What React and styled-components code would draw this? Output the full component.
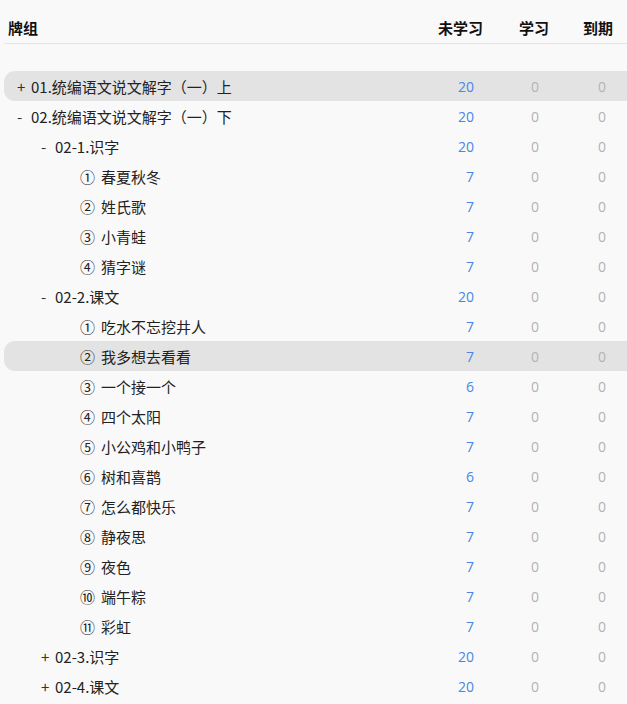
import React from "react";
import styled, { createGlobalStyle } from "styled-components";

const GlobalStyle = createGlobalStyle`
  html, body {
    margin: 0;
    padding: 0;
    background: #f9f9f9;
  }
  body {
    font-family: "Noto Sans CJK SC", "Noto Sans", sans-serif;
    color: #222;
  }
`;

const Page = styled.div`
  padding: 13px 0 0 4px;
  overflow: hidden;
`;

const HeaderRow = styled.div`
  display: grid;
  grid-template-columns: 1fr 70px 66px 64px;
  align-items: center;
  height: 30px;
  padding: 0 7px 0 4px;
  border-bottom: 1px solid #e4e4e4;
  font-size: 15px;
  font-weight: bold;
  color: #111;
`;

const HeadCell = styled.div`
  text-align: ${(p) => (p.$right ? "right" : "left")};
  padding-right: ${(p) => (p.$right ? "7px" : "0")};
  margin-top: -2px;
`;

const Body = styled.div`
  display: flex;
  flex-direction: column;
  padding-top: 27px;
`;

const Row = styled.div`
  display: grid;
  grid-template-columns: 1fr 70px 66px 64px;
  align-items: center;
  height: 30px;
  padding: 0 7px 0 0;
  border-radius: 11px 0 0 11px;
  background: ${(p) => (p.$active ? "#e3e3e3" : "transparent")};
  font-size: 15px;
`;

const NameCell = styled.div`
  display: flex;
  align-items: center;
  padding-left: ${(p) => 13 + p.$level * 24}px;
  white-space: nowrap;
`;

const Toggle = styled.span`
  display: inline-block;
  width: ${(p) => (p.$leaf ? 15 : 14)}px;
  color: #333;
`;

const Num = styled.span`
  margin-right: 6px;
  color: #222;
`;

const Label = styled.span`
  color: #222;
`;

const Count = styled.div`
  text-align: right;
  padding-right: ${(p) => p.$pad}px;
  color: ${(p) => (p.$blue ? "#4a86e8" : "#b3b3b3")};
  font-family: "Open Sans", "Noto Sans", sans-serif;
  font-size: 14px;
`;

const rows = [
  { level: 0, toggle: "+", name: "01.统编语文说文解字（一）上", n: 20, active: true },
  { level: 0, toggle: "-", name: "02.统编语文说文解字（一）下", n: 20 },
  { level: 1, toggle: "-", name: "02-1.识字", n: 20 },
  { level: 2, num: "①", name: "春夏秋冬", n: 7 },
  { level: 2, num: "②", name: "姓氏歌", n: 7 },
  { level: 2, num: "③", name: "小青蛙", n: 7 },
  { level: 2, num: "④", name: "猜字谜", n: 7 },
  { level: 1, toggle: "-", name: "02-2.课文", n: 20 },
  { level: 2, num: "①", name: "吃水不忘挖井人", n: 7 },
  { level: 2, num: "②", name: "我多想去看看", n: 7, active: true },
  { level: 2, num: "③", name: "一个接一个", n: 6 },
  { level: 2, num: "④", name: "四个太阳", n: 7 },
  { level: 2, num: "⑤", name: "小公鸡和小鸭子", n: 7 },
  { level: 2, num: "⑥", name: "树和喜鹊", n: 6 },
  { level: 2, num: "⑦", name: "怎么都快乐", n: 7 },
  { level: 2, num: "⑧", name: "静夜思", n: 7 },
  { level: 2, num: "⑨", name: "夜色", n: 7 },
  { level: 2, num: "⑩", name: "端午粽", n: 7 },
  { level: 2, num: "⑪", name: "彩虹", n: 7 },
  { level: 1, toggle: "+", name: "02-3.识字", n: 20 },
  { level: 1, toggle: "+", name: "02-4.课文", n: 20 },
];

export default function App() {
  return (
    <Page>
      <GlobalStyle />
      <HeaderRow>
        <HeadCell>牌组</HeadCell>
        <HeadCell $right>未学习</HeadCell>
        <HeadCell $right>学习</HeadCell>
        <HeadCell $right>到期</HeadCell>
      </HeaderRow>
      <Body>
        {rows.map((r, i) => (
          <Row key={i} $active={r.active}>
            <NameCell $level={r.level}>
              {r.toggle ? <Toggle>{r.toggle}</Toggle> : <Toggle $leaf />}
              {r.num && <Num>{r.num}</Num>}
              <Label>{r.name}</Label>
            </NameCell>
            <Count $blue $pad={16}>{r.n}</Count>
            <Count $pad={17}>0</Count>
            <Count $pad={14}>0</Count>
          </Row>
        ))}
      </Body>
    </Page>
  );
}
